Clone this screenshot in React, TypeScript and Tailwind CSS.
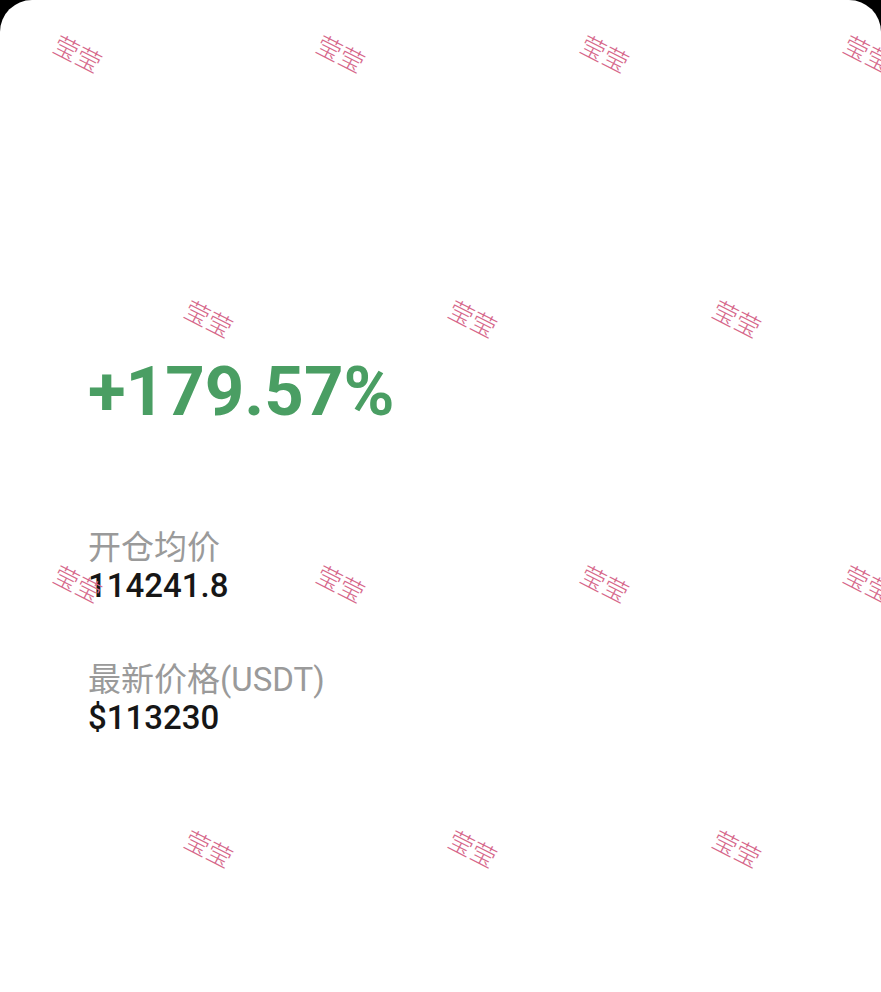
import React from "react";

const marks: [number, number][] = [];
const rows = [53, 318, 583, 848];
rows.forEach((y, i) => {
  const xs = i % 2 === 0 ? [78, 341, 605, 868] : [209, 473, 737];
  xs.forEach((x) => marks.push([x, y]));
});

export default function App() {
  return (
    <div className="w-[881px] h-[992px] bg-black overflow-hidden">
      <div
        className="relative w-full h-full bg-white rounded-t-[32px] overflow-hidden"
        style={{ fontFamily: "Roboto, 'Noto Sans CJK SC', sans-serif" }}
      >
        <div className="flex flex-col pl-[88px] pt-[354px]">
          <div className="text-[69px] leading-[76px] font-bold text-[#4a9e63]">
            +179.57%
          </div>
          <div className="mt-[98px] flex flex-col">
            <div className="text-[33px] leading-[40px] text-[#9a9a9a]">开仓均价</div>
            <div className="text-[33px] leading-[36px] font-medium text-[#161616]">114241.8</div>
          </div>
          <div className="mt-[56px] flex flex-col">
            <div className="text-[33px] leading-[40px] text-[#9a9a9a]">最新价格(USDT)</div>
            <div className="text-[33px] leading-[36px] font-medium text-[#161616]">$113230</div>
          </div>
        </div>
        {marks.map(([x, y], i) => (
          <span
            key={i}
            className="absolute text-[25px] leading-none text-[#d6678a] pointer-events-none whitespace-nowrap"
            style={{
              left: x,
              top: y,
              transform: "translate(-50%, -50%) rotate(27deg)",
              fontFamily: "'Noto Sans CJK SC', sans-serif",
              fontWeight: 300,
            }}
          >
            莹莹
          </span>
        ))}
      </div>
    </div>
  );
}
